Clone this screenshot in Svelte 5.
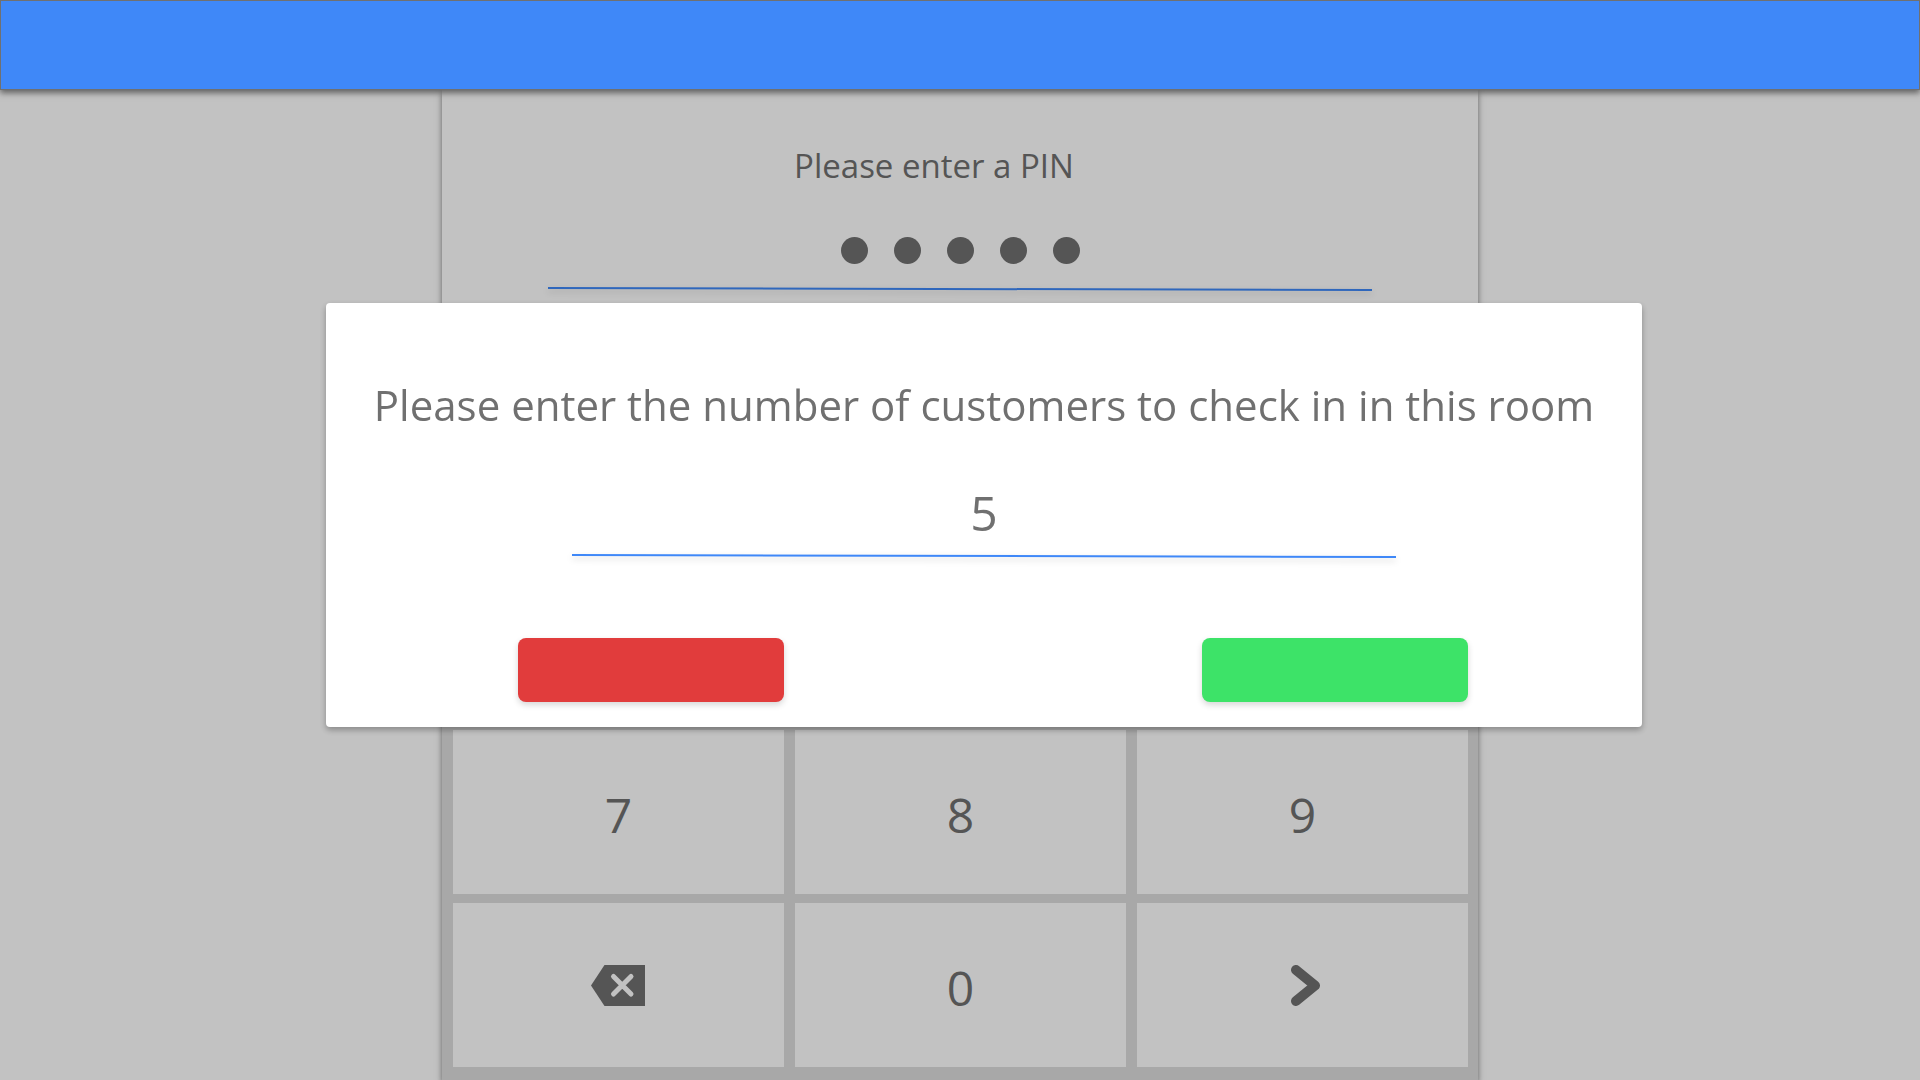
<script>
  let guests = $state('5');
  let pin = $state('12345');

  const keys = ['1', '2', '3', '4', '5', '6', '7', '8', '9', 'back', '0', 'next'];

  function press(key) {
    if (key === 'back') pin = pin.slice(0, -1);
    else if (key !== 'next' && pin.length < 5) pin += key;
  }
</script>

<div class="app">
  <header class="topbar"></header>

  <main class="stage">
    <section class="panel">
      <div class="entry">
        <label class="pin-label" for="pin">Please enter a PIN</label>
        <div class="pin-field">
          {#each pin as _}
            <span class="dot"></span>
          {/each}
          <input id="pin" class="pin-input" type="password" maxlength="5" bind:value={pin} />
        </div>
        <svg class="rule" viewBox="0 0 822 4" preserveAspectRatio="none" aria-hidden="true">
          <path d="M0 1L822 3" />
        </svg>
      </div>

      <div class="keypad">
        {#each keys as key}
          {#if key === 'back'}
            <button class="key" type="button" aria-label="Delete" onclick={() => press(key)}>
              <svg class="icon" width="54" height="41" viewBox="0 0 54 41">
                <path d="M0 20.5L13.5 0H54V41H13.5Z" fill="#707070" />
                <path d="M22.500 11.500L40 29M40 11.500L22.500 29" fill="none" stroke="#fff" stroke-width="5" stroke-linecap="round" />
              </svg>
            </button>
          {:else if key === 'next'}
            <button class="key next" type="button" aria-label="Continue" onclick={() => press(key)}>
              <svg class="icon" width="29" height="41" viewBox="0 0 29 41">
                <path d="M5 5L24 20.500L5 36" fill="none" stroke="#707070" stroke-width="10" stroke-linecap="round" stroke-linejoin="round" />
              </svg>
            </button>
          {:else}
            <button class="key digit" type="button" onclick={() => press(key)}>{key}</button>
          {/if}
        {/each}
      </div>
    </section>
  </main>

  <div class="backdrop">
    <form class="dialog" onsubmit={(e) => e.preventDefault()}>
      <label class="question" for="guests">Please enter the number of customers to check in in this room</label>
      <input id="guests" class="guests" type="text" inputmode="numeric" bind:value={guests} />
      <svg class="rule" viewBox="0 0 822 4" preserveAspectRatio="none" aria-hidden="true">
        <path d="M0 1L822 3" />
      </svg>
      <div class="actions">
        <button class="action cancel" type="button" aria-label="Cancel"></button>
        <button class="action confirm" type="submit" aria-label="Confirm"></button>
      </div>
    </form>
  </div>
</div>

<style>
  :global(body) {
    margin: 0;
    background: #fff;
  }

  .app,
  .app * {
    box-sizing: border-box;
  }

  .app {
    display: flex;
    flex-direction: column;
    min-height: 100vh;
    color: #707070;
    font-family: 'Segoe UI', 'Open Sans', 'Noto Sans', sans-serif;
  }

  .topbar {
    position: relative;
    z-index: 2;
    height: 90px;
    border: 1px solid #707070;
    background: #3f88f8;
    box-shadow: 0 3px 6px rgba(0, 0, 0, 0.5);
  }

  .stage {
    flex: 1;
    display: flex;
    justify-content: center;
  }

  .panel {
    display: flex;
    flex-direction: column;
    width: 100%;
    max-width: 1036px;
    background: #fff;
    box-shadow: 0 3px 6px rgba(0, 0, 0, 0.5);
  }

  .entry {
    display: flex;
    flex-direction: column;
    align-items: center;
    height: 285px;
    padding-top: 52px;
  }

  .pin-label {
    padding-right: 52px;
    font-size: 33px;
    line-height: 48px;
  }

  .pin-field {
    position: relative;
    display: flex;
    justify-content: center;
    gap: 26px;
    width: 100%;
    max-width: 824px;
    height: 71px;
    margin: 26px 0 0;
    padding-top: 21px;
  }

  .dot {
    width: 27px;
    height: 27px;
    border-radius: 50%;
    background: #707070;
  }

  .pin-input {
    position: absolute;
    inset: 0;
    width: 100%;
    border: 0;
    outline: 0;
    opacity: 0;
  }

  .rule {
    display: block;
    flex: none;
    width: 100%;
    max-width: 824px;
    height: 4px;
    overflow: visible;
    filter: drop-shadow(0 3px 3px rgba(0, 0, 0, 0.16));
  }

  .rule path {
    fill: none;
    stroke: #3f88f8;
    stroke-width: 2;
  }

  .keypad {
    flex: 1;
    display: grid;
    grid-template-columns: repeat(3, 1fr);
    grid-auto-rows: 1fr;
    gap: 9px 11px;
    padding: 9px 10px 13px 11px;
    background: #ddd;
  }

  .key {
    display: flex;
    align-items: center;
    justify-content: center;
    padding: 0 2px 0 0;
    border: 0;
    background: #fff;
    color: inherit;
    font-family: inherit;
    font-size: 48px;
    line-height: 64px;
  }

  .key.digit {
    padding: 6px 0 0;
  }

  .key.next {
    padding: 0 0 0 6px;
  }

  .icon {
    display: block;
  }

  .backdrop {
    position: fixed;
    inset: 90px 0 0;
    z-index: 1;
    display: flex;
    align-items: center;
    justify-content: center;
    padding: 0 0 140px 48px;
    background: rgba(0, 0, 0, 0.24);
  }

  .dialog {
    display: flex;
    flex-direction: column;
    align-items: center;
    width: 100%;
    max-width: 1316px;
    padding: 70px 0 25px;
    border-radius: 4px;
    background: #fff;
    box-shadow: 0 3px 6px rgba(0, 0, 0, 0.3);
  }

  .question {
    font-size: 42px;
    line-height: 64px;
    text-align: center;
  }

  .guests {
    width: 100%;
    max-width: 824px;
    height: 64px;
    margin: 44px 0 9px;
    padding: 0;
    border: 0;
    outline: 0;
    background: transparent;
    color: inherit;
    font-family: inherit;
    font-size: 48px;
    line-height: 64px;
    text-align: center;
  }

  .actions {
    display: flex;
    justify-content: space-between;
    width: 100%;
    margin-top: 80px;
    padding: 0 174px 0 192px;
  }

  .action {
    width: 266px;
    height: 64px;
    border: 0;
    border-radius: 8px;
    box-shadow: 0 3px 6px rgba(0, 0, 0, 0.16);
  }

  .cancel {
    background: #e13c3c;
  }

  .confirm {
    background: #3de368;
  }
</style>
